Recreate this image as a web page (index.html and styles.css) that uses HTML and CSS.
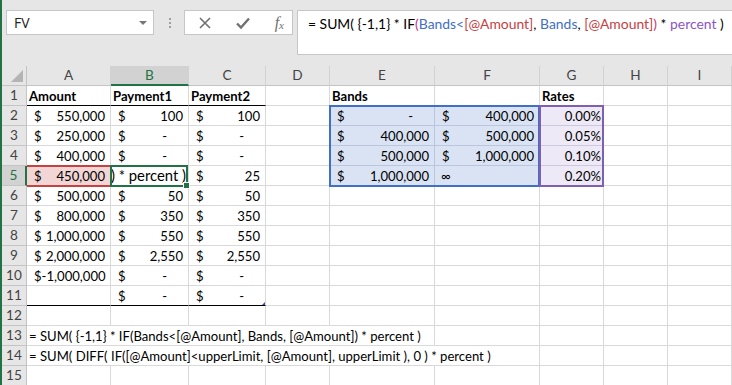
FILE: index.html
```html
<!DOCTYPE html>
<html>
<head>
  <meta charset="UTF-8"/>
  <title>Bands</title>
  <link rel="stylesheet" href="styles.css">
</head>
<body>
  <div class="window">
    <div class="topbar">
      <div class="namebox">
        <span>FV</span>
        <span class="caret"></span>
      </div>
      <div class="grip"><i></i><i></i><i></i></div>
      <div class="fbuttons">
        <svg width="14" height="14" viewBox="0 0 14 14"><path d="M2 2 L12 12 M12 2 L2 12" stroke="#707070" stroke-width="1.6" fill="none"/></svg>
        <svg width="16" height="14" viewBox="0 0 16 14"><path d="M2 7.5 L6 11.5 L14 2.5" stroke="#707070" stroke-width="2.4" fill="none"/></svg>
        <span class="fx">f<sub>x</sub></span>
      </div>
      <div class="formula">= SUM( {-1,1} * IF<span class="paren">(</span><span class="ref-b">Bands&lt;</span><span class="ref-r">[@Amount]</span>, <span class="ref-b">Bands</span>, <span class="ref-r">[@Amount]</span><span class="paren">)</span> * <span class="ref-p">percent</span> )</div>
    </div>

    <div class="stack">
      <div class="sheet">
        <!-- column headers -->
        <div class="corner"><span class="tri"></span></div>
        <div class="ch">A</div><div class="ch on">B</div><div class="ch">C</div><div class="ch">D</div>
        <div class="ch">E</div><div class="ch">F</div><div class="ch">G</div><div class="ch">H</div><div class="ch">I</div>

        <div class="rh">1</div>
        <div class="c hd tb">Amount</div><div class="c hd tb">Payment1</div><div class="c hd tb">Payment2</div>
        <div class="c"></div><div class="c hd">Bands</div><div class="c"></div><div class="c hd">Rates</div>
        <div class="c"></div><div class="c"></div>

        <div class="rh">2</div>
        <div class="c acc"><span>$</span><span>550,000</span></div>
        <div class="c acc"><span>$</span><span>100</span></div>
        <div class="c acc"><span>$</span><span>100</span></div>
        <div class="c"></div>
        <div class="c acc band"><span>$</span><span class="dash">-</span></div>
        <div class="c acc band"><span>$</span><span>400,000</span></div>
        <div class="c pct rate">0.00%</div>
        <div class="c"></div><div class="c"></div>

        <div class="rh">3</div>
        <div class="c acc"><span>$</span><span>250,000</span></div>
        <div class="c acc"><span>$</span><span class="dash">-</span></div>
        <div class="c acc"><span>$</span><span class="dash">-</span></div>
        <div class="c"></div>
        <div class="c acc band"><span>$</span><span>400,000</span></div>
        <div class="c acc band"><span>$</span><span>500,000</span></div>
        <div class="c pct rate">0.05%</div>
        <div class="c"></div><div class="c"></div>

        <div class="rh">4</div>
        <div class="c acc"><span>$</span><span>400,000</span></div>
        <div class="c acc"><span>$</span><span class="dash">-</span></div>
        <div class="c acc"><span>$</span><span class="dash">-</span></div>
        <div class="c"></div>
        <div class="c acc band"><span>$</span><span>500,000</span></div>
        <div class="c acc band"><span>$</span><span>1,000,000</span></div>
        <div class="c pct rate">0.10%</div>
        <div class="c"></div><div class="c"></div>

        <div class="rh on">5</div>
        <div class="c acc amount"><span>$</span><span>450,000</span></div>
        <div class="c editing">) * percent )</div>
        <div class="c acc"><span>$</span><span>25</span></div>
        <div class="c"></div>
        <div class="c acc band"><span>$</span><span>1,000,000</span></div>
        <div class="c band inf">&infin;</div>
        <div class="c pct rate">0.20%</div>
        <div class="c"></div><div class="c"></div>

        <div class="rh">6</div>
        <div class="c acc"><span>$</span><span>500,000</span></div>
        <div class="c acc"><span>$</span><span>50</span></div>
        <div class="c acc"><span>$</span><span>50</span></div>
        <div class="c"></div><div class="c"></div><div class="c"></div><div class="c"></div><div class="c"></div><div class="c"></div>

        <div class="rh">7</div>
        <div class="c acc"><span>$</span><span>800,000</span></div>
        <div class="c acc"><span>$</span><span>350</span></div>
        <div class="c acc"><span>$</span><span>350</span></div>
        <div class="c"></div><div class="c"></div><div class="c"></div><div class="c"></div><div class="c"></div><div class="c"></div>

        <div class="rh">8</div>
        <div class="c acc"><span>$</span><span>1,000,000</span></div>
        <div class="c acc"><span>$</span><span>550</span></div>
        <div class="c acc"><span>$</span><span>550</span></div>
        <div class="c"></div><div class="c"></div><div class="c"></div><div class="c"></div><div class="c"></div><div class="c"></div>

        <div class="rh">9</div>
        <div class="c acc"><span>$</span><span>2,000,000</span></div>
        <div class="c acc"><span>$</span><span>2,550</span></div>
        <div class="c acc"><span>$</span><span>2,550</span></div>
        <div class="c"></div><div class="c"></div><div class="c"></div><div class="c"></div><div class="c"></div><div class="c"></div>

        <div class="rh">10</div>
        <div class="c acc"><span>$</span><span>-1,000,000</span></div>
        <div class="c acc"><span>$</span><span class="dash">-</span></div>
        <div class="c acc"><span>$</span><span class="dash">-</span></div>
        <div class="c"></div><div class="c"></div><div class="c"></div><div class="c"></div><div class="c"></div><div class="c"></div>

        <div class="rh">11</div>
        <div class="c tb"></div>
        <div class="c acc tb"><span>$</span><span class="dash">-</span></div>
        <div class="c acc tb resize"><span>$</span><span class="dash">-</span></div>
        <div class="c"></div><div class="c"></div><div class="c"></div><div class="c"></div><div class="c"></div><div class="c"></div>

        <div class="rh">12</div>
        <div class="c"></div><div class="c"></div><div class="c"></div><div class="c"></div><div class="c"></div>
        <div class="c"></div><div class="c"></div><div class="c"></div><div class="c"></div>

        <div class="rh">13</div>
        <div class="c text span5">= SUM( {-1,1} * IF(Bands&lt;[@Amount], Bands, [@Amount]) * percent )</div>
        <div class="c"></div><div class="c"></div><div class="c"></div><div class="c"></div>

        <div class="rh">14</div>
        <div class="c text span6">= SUM( DIFF( IF([@Amount]&lt;upperLimit, [@Amount], upperLimit ), 0 ) * percent )</div>
        <div class="c"></div><div class="c"></div><div class="c"></div>

        <div class="rh">15</div>
        <div class="c"></div><div class="c"></div><div class="c"></div><div class="c"></div><div class="c"></div>
        <div class="c"></div><div class="c"></div><div class="c"></div><div class="c"></div>
      </div>

      <!-- range highlights drawn over the cells -->
      <div class="marks">
        <div class="mark m-amount"></div>
        <div class="mark m-edit"></div>
        <div class="mark m-bands"></div>
        <div class="mark m-rates"></div>
      </div>
    </div>
  </div>
</body>
</html>
```

FILE: styles.css
```css
body {
  margin: 0;
  background: #fff;
  overflow: hidden;
}
.window {
  border-left: 2px solid #217346;
  height: 385px;
  overflow: hidden;
  font-family: "Lato", "Liberation Sans", sans-serif;
}

/* formula bar */
.topbar {
  height: 66px;
  box-sizing: border-box;
  padding-top: 10px;
  background: #e6e6e6;
  display: flex;
  align-items: flex-start;
}
.namebox {
  margin-left: 4px;
  width: 148px;
  height: 25px;
  box-sizing: border-box;
  background: #fff;
  border: 1px solid #c6c6c6;
  display: flex;
  align-items: center;
  justify-content: space-between;
  padding: 0 6px 0 7px;
  font-family: "Open Sans", sans-serif;
  font-size: 14px;
  color: #222;
}
.caret {
  width: 0;
  height: 0;
  border-left: 4px solid transparent;
  border-right: 4px solid transparent;
  border-top: 4px solid #777;
}
.grip {
  margin: 8px 0 0 15px;
  display: flex;
  flex-direction: column;
  gap: 2px;
}
.grip i {
  width: 2px;
  height: 2px;
  background: #a0a0a0;
}
.fbuttons {
  margin-left: 13px;
  width: 109px;
  height: 25px;
  box-sizing: border-box;
  background: #fff;
  border: 1px solid #c6c6c6;
  display: flex;
  align-items: center;
  justify-content: space-between;
  padding: 0 8px 0 13px;
}
.fx {
  font-family: "Liberation Serif", serif;
  font-style: italic;
  font-size: 16px;
  color: #707070;
}
.fx sub {
  font-size: 11px;
  vertical-align: -1px;
}
.formula {
  margin-left: 4px;
  flex: 1;
  height: 45px;
  box-sizing: border-box;
  background: #fff;
  border: 1px solid #c6c6c6;
  border-right: none;
  padding: 2px 0 0 10px;
  font-size: 13.9px;
  line-height: 22px;
  color: #000;
  white-space: nowrap;
  overflow: hidden;
}
.ref-b { color: #3f6fc6; }
.ref-r { color: #c8403f; }
.ref-p { color: #8a55c6; }
.paren { color: #c0397a; }

/* grid: cells and the highlight layer share one area */
.stack {
  display: grid;
}
.sheet,
.marks {
  grid-area: 1 / 1;
  display: grid;
  grid-template-columns: 25px 84px 78px 77px 64px 105px 105px 64px 64px 1fr;
  grid-auto-rows: 20px;
}
.sheet {
  font-size: 13.1px;
  color: #000;
}
.sheet > div {
  box-sizing: border-box;
  border-right: 1px solid #d9d9d9;
  border-bottom: 1px solid #d9d9d9;
  line-height: 19px;
  white-space: nowrap;
  overflow: hidden;
}
.corner,
.ch,
.rh {
  background: #e6e6e6;
  color: #444;
  font-size: 13.6px;
  text-align: center;
}
.sheet > .corner,
.sheet > .ch,
.sheet > .rh {
  border-color: #c4c4c4;
}
.sheet > .ch {
  border-right-color: #d2d2d2;
}
.sheet > .ch.on {
  background: #d2d2d2;
  color: #217346;
  border-bottom: 2px solid #217346;
}
.sheet > .rh.on {
  background: #d2d2d2;
  color: #217346;
  border-right: 2px solid #217346;
}
.corner {
  position: relative;
}
.tri {
  position: absolute;
  right: 3px;
  bottom: 3px;
  width: 0;
  height: 0;
  border-left: 12px solid transparent;
  border-bottom: 12px solid #b4b4b4;
}
.c {
  padding: 1px 2px 0;
}
.hd { font-weight: bold; }
.sheet > .tb { border-bottom-color: #000; }
.acc {
  display: flex;
  justify-content: space-between;
  padding: 1px 5px 0 7px;
}
.dash { padding-right: 16px; }
.pct {
  text-align: right;
}
.sheet > .text {
  overflow: visible;
}
.span5 { grid-column: span 5; }
.span6 { grid-column: span 6; }
.inf { padding-left: 6px; }
.editing {
  padding: 0 0 0 0;
  font-size: 14.8px;
}
.resize {
  position: relative;
  overflow: visible;
}
.resize::after {
  content: "";
  position: absolute;
  right: 0;
  bottom: -1px;
  width: 0;
  height: 0;
  border-left: 4px solid transparent;
  border-bottom: 4px solid #3f4fa8;
}

/* fills of the referenced ranges */
.sheet > .band {
  background: #dae3f3;
  border-color: #b9c6de;
}
.sheet > .rate {
  background: #eee9f6;
  border-color: #cfc6df;
}
.sheet > .amount {
  background: #f2d6d6;
}

/* highlight borders */
.marks {
  pointer-events: none;
}
.mark {
  box-sizing: border-box;
}
.m-amount {
  grid-column: 2;
  grid-row: 6;
  margin: -1px 0 -1px 0;
  border-top: 2px solid #c8403f;
  border-bottom: 2px solid #c8403f;
}
.m-edit {
  grid-column: 3;
  grid-row: 6;
  margin: -1px 1px -1px -1px;
  border: 2px solid #217346;
  position: relative;
}
.m-edit::after {
  content: "";
  position: absolute;
  right: -4px;
  bottom: -4px;
  width: 5px;
  height: 5px;
  background: #217346;
  border: 1px solid #fff;
}
.m-bands {
  grid-column: 6 / 8;
  grid-row: 3 / 7;
  margin: -1px 0 -1px -1px;
  border: 2px solid #3f6fc6;
}
.m-rates {
  grid-column: 8;
  grid-row: 3 / 7;
  margin: -1px 0 -1px -1px;
  border: 2px solid #7f5fae;
}
```
